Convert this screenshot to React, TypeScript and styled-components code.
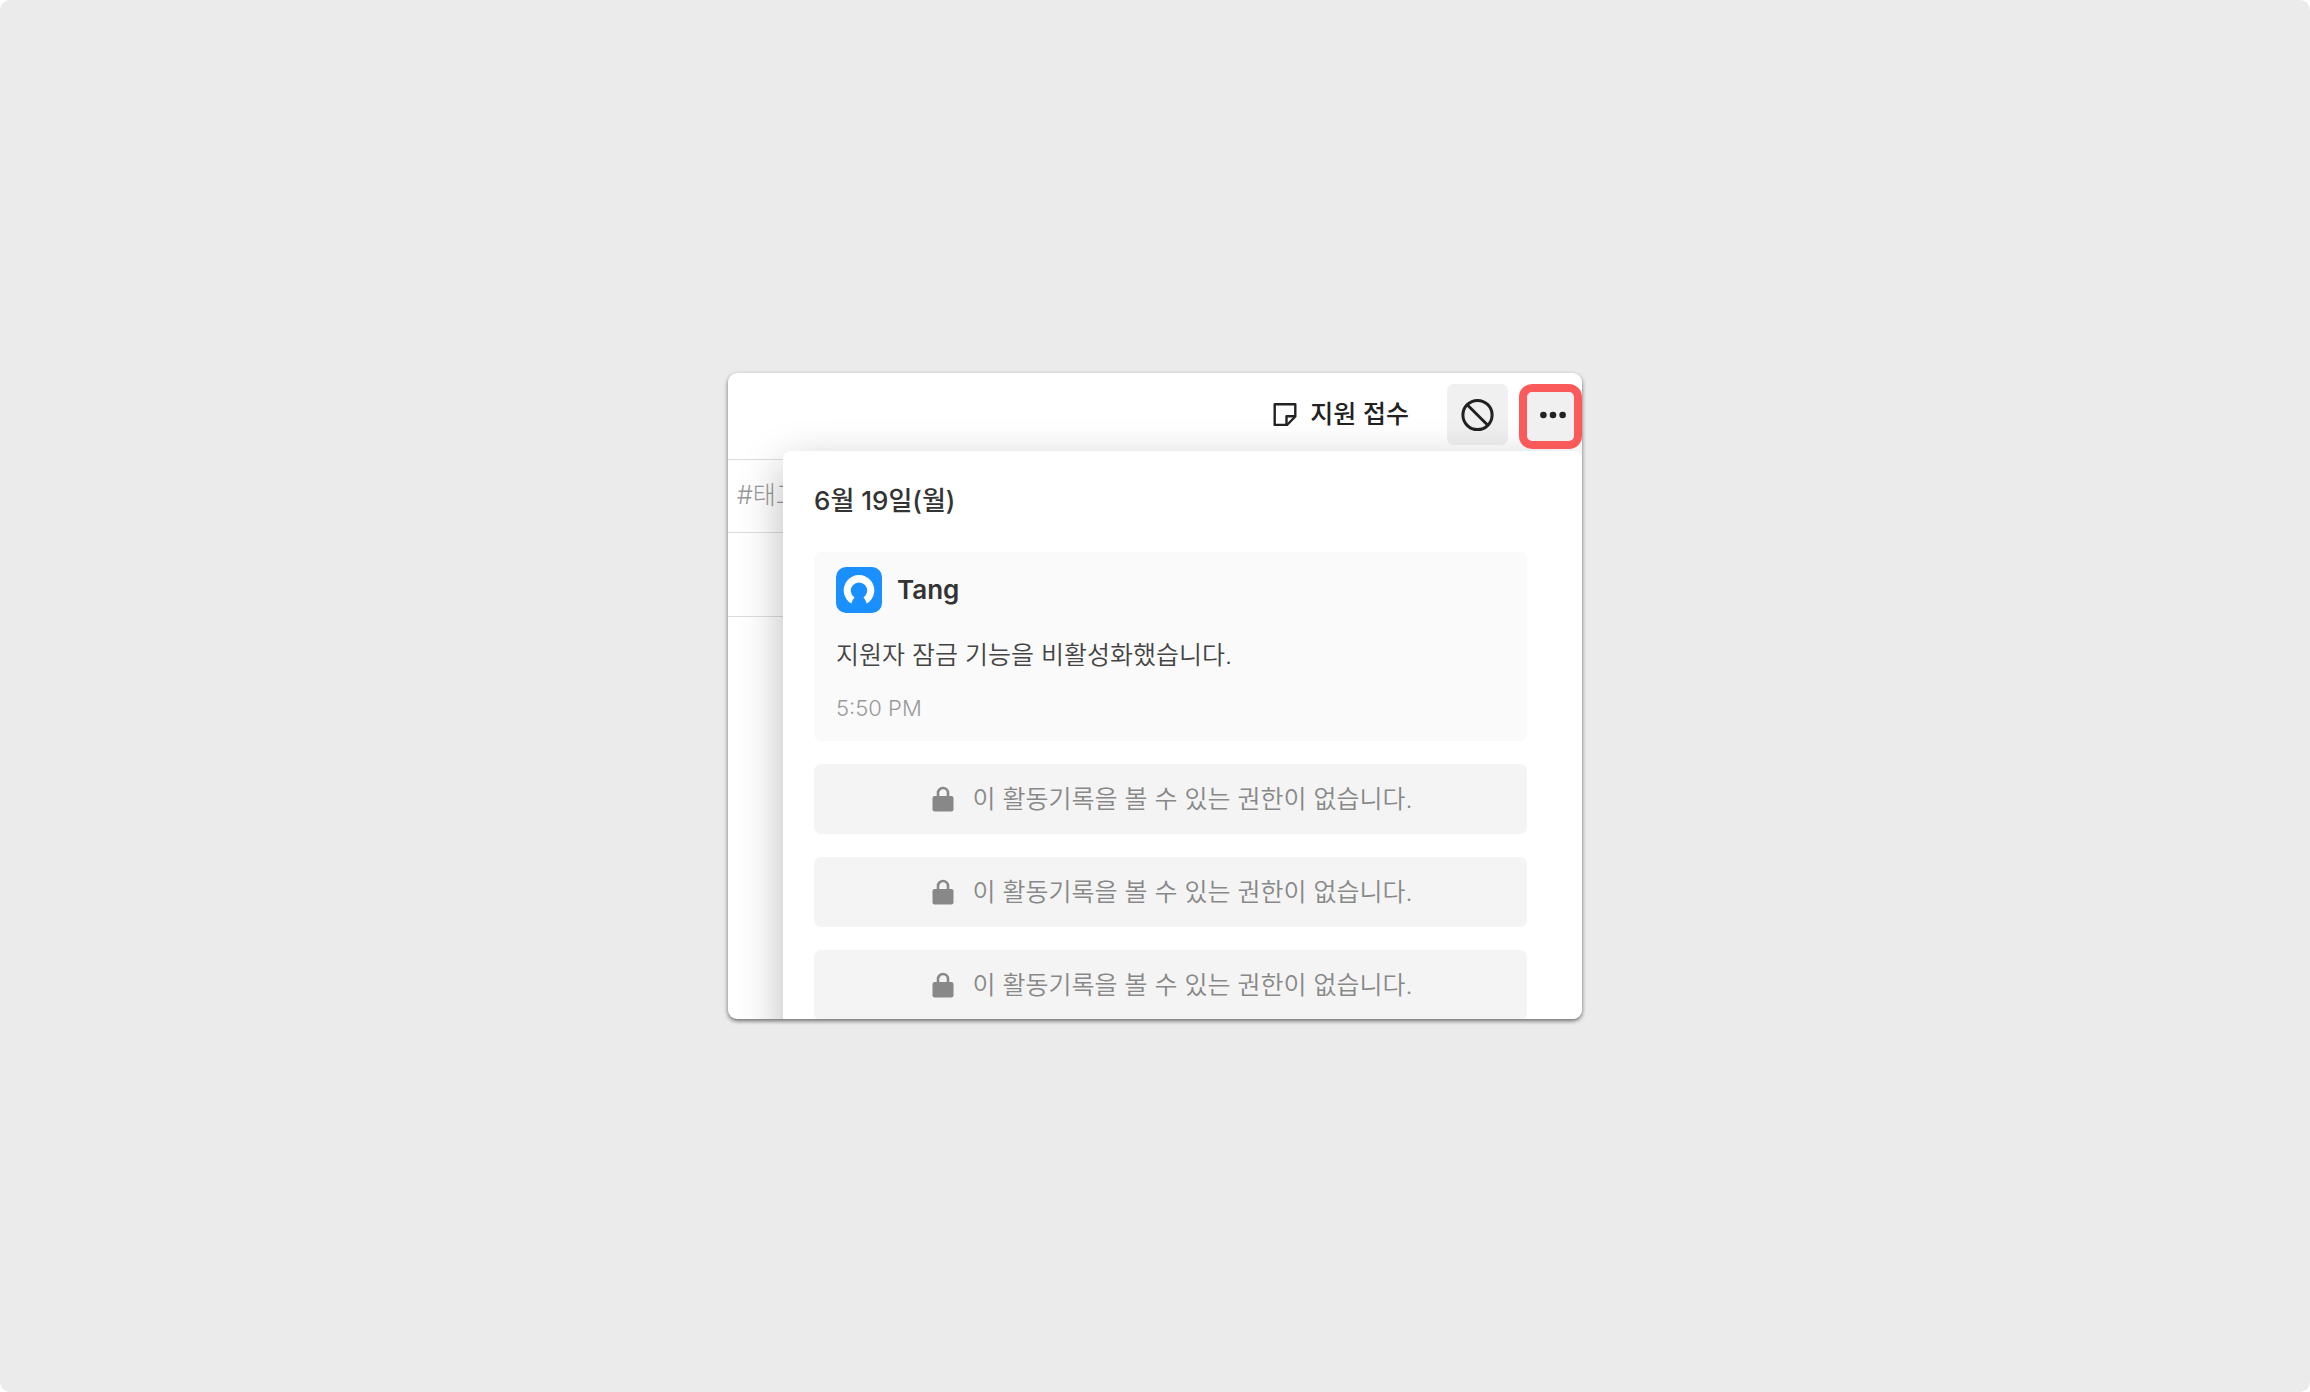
import React from "react";
import styled, { createGlobalStyle } from "styled-components";

const GlobalStyle = createGlobalStyle`
  *, *::before, *::after { box-sizing: border-box; }
  body {
    margin: 0;
    background: #ffffff;
    font-family: Inter, "Noto Sans CJK KR", sans-serif;
    color: #333333;
  }
  h1, h2, h3, p, ul { margin: 0; padding: 0; }
`;

const Page = styled.main`
  min-height: 100vh;
  display: flex;
  align-items: center;
  justify-content: center;
  background: #ebebeb;
  border-radius: 10px;
`;

const Window = styled.section`
  width: 100%;
  max-width: 854px;
  max-height: 646px;
  overflow: hidden;
  background: #ffffff;
  border-radius: 9px;
  box-shadow: 0 2px 4px rgba(0, 0, 0, 0.55);
`;

const Header = styled.header`
  height: 87px;
  display: flex;
  align-items: flex-start;
  justify-content: flex-end;
  padding-top: 11px;
  border-bottom: 1px solid #dcdcdc;
`;

const Stage = styled.h1`
  display: flex;
  align-items: center;
  gap: 13px;
  height: 60px;
  margin-right: 38px;
  font-size: 25px;
  font-weight: 500;
  line-height: 36px;
  color: #222222;
`;

const IconButton = styled.button<{ $highlighted?: boolean }>`
  display: flex;
  align-items: center;
  justify-content: center;
  width: ${(p) => (p.$highlighted ? 63 : 61)}px;
  height: ${(p) => (p.$highlighted ? 65 : 61)}px;
  margin-left: ${(p) => (p.$highlighted ? 11 : 0)}px;
  padding: ${(p) => (p.$highlighted ? "0 0 4px 5px" : "0")};
  border: ${(p) => (p.$highlighted ? "8px solid #fb5a5a" : "0")};
  border-radius: ${(p) => (p.$highlighted ? 13 : 7)}px;
  background: #f0f0f0;
  color: #222222;
  position: relative;
  z-index: ${(p) => (p.$highlighted ? 2 : 0)};
`;

const Body = styled.div`
  display: grid;
  grid-template-columns: 55px 1fr;
`;

const Sidebar = styled.div`
  min-width: 0;
`;

const TagField = styled.p`
  height: 73px;
  padding-left: 9px;
  border-bottom: 1px solid #dcdcdc;
  font-size: 25px;
  font-weight: 300;
  line-height: 70px;
  white-space: nowrap;
  color: #999999;
`;

const EmptyField = styled.div`
  height: 84px;
  border-bottom: 1px solid #dcdcdc;
`;

const Panel = styled.section`
  position: relative;
  z-index: 1;
  margin-top: -9px;
  padding: 30px 55px 24px 31px;
  background: #ffffff;
  border-radius: 8px;
  box-shadow: 0 14px 44px rgba(0, 0, 0, 0.28);
`;

const DateHeading = styled.h2`
  margin-bottom: 31px;
  font-size: 26px;
  font-weight: 500;
  line-height: 40px;
`;

const Records = styled.ul`
  display: flex;
  flex-direction: column;
  gap: 23px;
  list-style: none;
`;

const Record = styled.li`
  height: 189px;
  padding: 15px 22px;
  border-radius: 7px;
  background: #fafafa;
`;

const Author = styled.div`
  display: flex;
  align-items: center;
  gap: 15px;
  margin-bottom: 24px;
`;

const AuthorName = styled.h3`
  font-size: 26px;
  font-weight: 600;
  line-height: 36px;
`;

const Message = styled.p`
  margin-bottom: 21px;
  font-size: 25px;
  font-weight: 350;
  line-height: 36px;
  color: #444444;
`;

const Time = styled.time`
  display: block;
  font-size: 22px;
  font-weight: 300;
  line-height: 28px;
  color: #999999;
`;

const LockedRecord = styled.li`
  height: 70px;
  display: flex;
  align-items: center;
  justify-content: center;
  gap: 18px;
  padding-left: 4px;
  border-radius: 7px;
  background: #f4f4f4;
  font-size: 25px;
  font-weight: 350;
  line-height: 36px;
  color: #888888;
`;

const NoteIcon = () => (
  <svg width="24" height="24" viewBox="0 0 24 24" fill="none" stroke="currentColor" strokeWidth="2.4" strokeLinejoin="round" aria-hidden="true">
    <path d="M1.7 2.2H22.3V14.5L14 23H1.7Z" />
    <path d="M13.5 22.5V14.2H22" />
  </svg>
);

const BlockIcon = () => (
  <svg width="34" height="34" viewBox="0 0 34 34" fill="none" stroke="currentColor" strokeWidth="3" aria-hidden="true">
    <circle cx="16.5" cy="17" r="14.6" />
    <path d="M6.2 6.7L26.8 27.3" />
  </svg>
);

const MoreIcon = () => (
  <svg width="28" height="8" viewBox="0 0 28 8" fill="currentColor" aria-hidden="true">
    <circle cx="4.4" cy="4" r="3.3" />
    <circle cx="14" cy="4" r="3.3" />
    <circle cx="23.6" cy="4" r="3.3" />
  </svg>
);

const AvatarLogo = () => (
  <svg width="46" height="46" viewBox="0 0 46 46" aria-hidden="true">
    <rect width="46" height="46" rx="10" fill="#1a90ff" />
    <path
      fill="#ffffff"
      d="M15.4 36.6A15.3 15.3 0 1 1 30.6 36.6L29.4 33L27.5 30.6A8.2 8.2 0 1 0 18.5 30.6L16.6 33Z"
    />
  </svg>
);

const LockIcon = () => (
  <svg width="22" height="26" viewBox="0 0 22 26" aria-hidden="true">
    <path d="M6 11V7A5 5 0 0 1 16 7V11" fill="none" stroke="#888888" strokeWidth="2.6" />
    <rect x="0.5" y="10" width="21" height="15.5" rx="2.2" fill="#888888" />
  </svg>
);

const lockedRecords = [1, 2, 3];

export default function App() {
  return (
    <>
      <GlobalStyle />
      <Page>
        <Window>
          <Header>
            <Stage>
              <NoteIcon />
              지원 접수
            </Stage>
            <IconButton type="button" aria-label="차단">
              <BlockIcon />
            </IconButton>
            <IconButton type="button" aria-label="더보기" $highlighted>
              <MoreIcon />
            </IconButton>
          </Header>
          <Body>
            <Sidebar>
              <TagField>#태그</TagField>
              <EmptyField />
            </Sidebar>
            <Panel>
              <DateHeading>6월 19일(월)</DateHeading>
              <Records>
                <Record>
                  <Author>
                    <AvatarLogo />
                    <AuthorName>Tang</AuthorName>
                  </Author>
                  <Message>지원자 잠금 기능을 비활성화했습니다.</Message>
                  <Time dateTime="17:50">5:50 PM</Time>
                </Record>
                {lockedRecords.map((id) => (
                  <LockedRecord key={id}>
                    <LockIcon />
                    이 활동기록을 볼 수 있는 권한이 없습니다.
                  </LockedRecord>
                ))}
              </Records>
            </Panel>
          </Body>
        </Window>
      </Page>
    </>
  );
}
